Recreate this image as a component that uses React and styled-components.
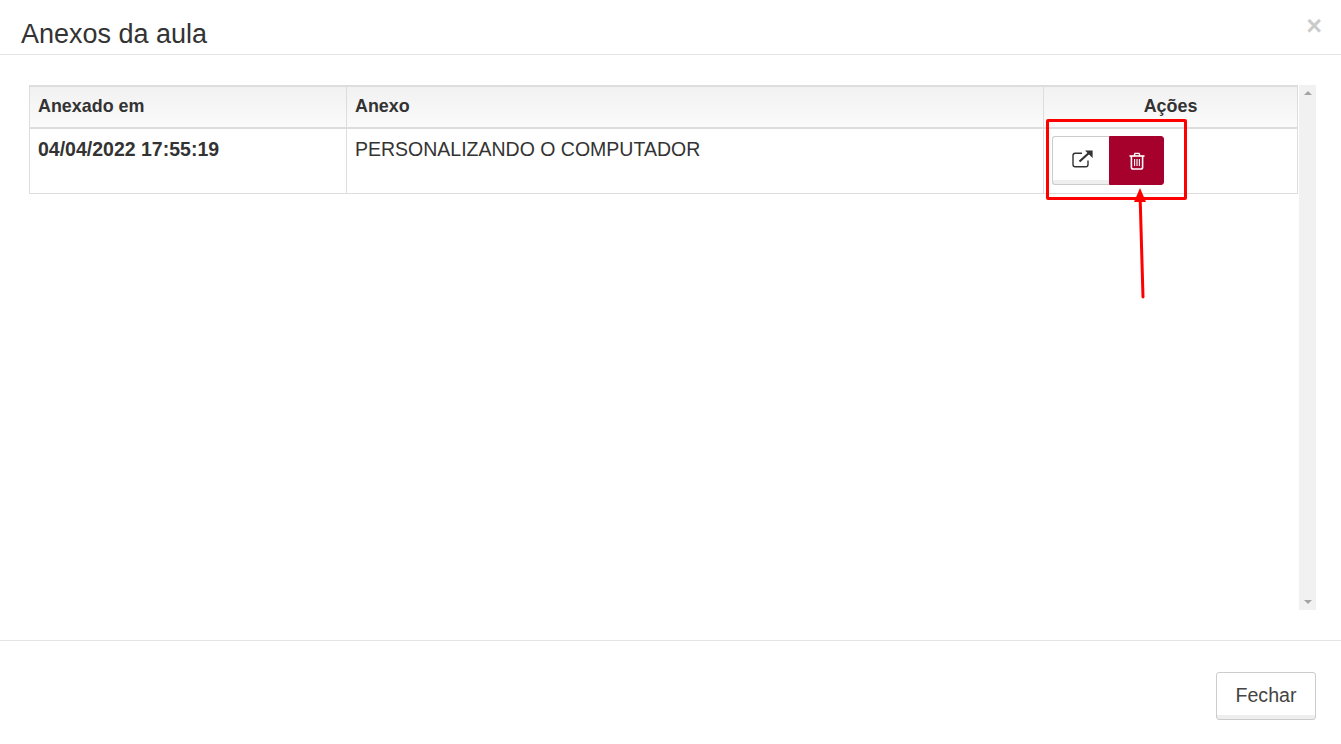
import React from "react";
import styled, { createGlobalStyle } from "styled-components";

const Global = createGlobalStyle`
  html, body { margin: 0; padding: 0; background: #fff; }
  body { font-family: "Liberation Sans", Arial, sans-serif; color: #333; }
`;

const Modal = styled.div`
  position: relative;
  width: 1341px;
  height: 744px;
  overflow: hidden;
  display: flex;
  flex-direction: column;
  background: #fff;
`;

const Header = styled.header`
  height: 54px;
  flex: none;
  box-sizing: content-box;
  border-bottom: 1px solid #e5e5e5;
  display: flex;
  align-items: flex-start;
  justify-content: space-between;
  padding: 0 19px 0 21px;
`;

const Title = styled.h4`
  margin: 18px 0 0;
  font-size: 27px;
  line-height: 32px;
  font-weight: 400;
  color: #333;
`;

const Close = styled.button`
  border: 0;
  padding: 0;
  margin: 13px 0 0;
  background: none;
  font-family: "Liberation Sans", Arial, sans-serif;
  font-size: 27px;
  line-height: 26px;
  font-weight: 700;
  color: #000;
  opacity: 0.2;
`;

const Body = styled.main`
  flex: none;
  height: 525px;
  margin-top: 30px;
  padding: 0 25px 0 29px;
  display: flex;
  gap: 2px;
`;

const TableArea = styled.div`
  flex: 1;
  min-width: 0;
`;

const Table = styled.table`
  width: 1268px;
  table-layout: fixed;
  border-collapse: collapse;
  font-size: 19.5px;
  line-height: 26px;
  color: #333;
`;

const HeadRow = styled.tr`
  height: 42px;
  background: linear-gradient(to bottom, #f1f1f1, #fbfbfb);
`;

const Th = styled.th`
  box-sizing: border-box;
  padding: 0 8px 2px;
  font-size: 17.9px;
  line-height: 20px;
  font-weight: 700;
  text-align: ${(p) => p.$align || "left"};
  border: 1px solid #ddd;
  border-top: 2px solid #ddd;
  border-bottom: 2px solid #ddd;
  vertical-align: middle;
`;

const Td = styled.td`
  box-sizing: border-box;
  height: 65px;
  padding: 7px 8px;
  vertical-align: top;
  border: 1px solid #ddd;
  font-weight: ${(p) => (p.$bold ? 700 : 400)};
`;

const ButtonGroup = styled.div`
  display: flex;
  width: 112px;
  height: 49px;
`;

const IconButton = styled.button`
  box-sizing: border-box;
  width: ${(p) => (p.$danger ? "55px" : "57px")};
  height: 49px;
  padding: 0;
  display: flex;
  align-items: center;
  justify-content: center;
  border: ${(p) => (p.$danger ? "1px solid #a6002c" : "1px solid #ccc")};
  border-right-width: ${(p) => (p.$danger ? "1px" : "0")};
  border-radius: ${(p) => (p.$danger ? "0 3px 3px 0" : "3px 0 0 3px")};
  background: ${(p) =>
    p.$danger ? "#a6002c" : "linear-gradient(to bottom, #fff 92%, #eee 92%)"};
  color: ${(p) => (p.$danger ? "#fff" : "#333")};
`;

const OpenIcon = styled.svg`
  margin: 0 0 4px 3px;
`;

const Scrollbar = styled.div`
  flex: none;
  width: 17px;
  background: #f1f1f1;
  display: flex;
  flex-direction: column;
  justify-content: space-between;
  align-items: center;
  padding: 6px 0;
`;

const ScrollUp = styled.span`
  width: 0;
  height: 0;
  border-left: 4px solid transparent;
  border-right: 4px solid transparent;
  border-bottom: 4px solid #a3a3a3;
`;

const ScrollDown = styled.span`
  width: 0;
  height: 0;
  border-left: 4px solid transparent;
  border-right: 4px solid transparent;
  border-top: 4px solid #a3a3a3;
`;

const Footer = styled.footer`
  margin-top: 30px;
  flex: 1;
  border-top: 1px solid #e5e5e5;
  display: flex;
  justify-content: flex-end;
  align-items: flex-start;
  padding: 31px 25px 0 0;
`;

const CloseButton = styled.button`
  box-sizing: border-box;
  width: 100px;
  height: 48px;
  border: 1px solid #ccc;
  border-radius: 3px;
  background: linear-gradient(to bottom, #fff 92%, #eee 92%);
  font-family: "Liberation Sans", Arial, sans-serif;
  font-size: 19.6px;
  line-height: 44px;
  color: #444;
  padding: 0 0 2px;
`;

const Highlight = styled.div`
  position: absolute;
  left: 1046px;
  top: 119px;
  width: 141px;
  height: 81px;
  box-sizing: border-box;
  border: 3px solid #fe0000;
  border-radius: 2px;
  pointer-events: none;
`;

const Arrow = styled.svg`
  position: absolute;
  left: 1125px;
  top: 180px;
  pointer-events: none;
`;

export default function App() {
  return (
    <Modal>
      <Global />
      <Header>
        <Title>Anexos da aula</Title>
        <Close>×</Close>
      </Header>
      <Body>
        <TableArea>
          <Table>
            <colgroup>
              <col style={{ width: 317 }} />
              <col style={{ width: 697 }} />
              <col style={{ width: 254 }} />
            </colgroup>
            <thead>
              <HeadRow>
                <Th>Anexado em</Th>
                <Th>Anexo</Th>
                <Th $align="center">Ações</Th>
              </HeadRow>
            </thead>
            <tbody>
              <tr>
                <Td $bold>04/04/2022 17:55:19</Td>
                <Td>PERSONALIZANDO O COMPUTADOR</Td>
                <Td>
                  <ButtonGroup>
                    <IconButton aria-label="Abrir">
                      <OpenIcon width="22" height="18" viewBox="0 0 22 18" fill="none">
                        <path d="M16 10.5V14.5a2.2 2.2 0 0 1-2.2 2.2H3.2A2.2 2.2 0 0 1 1 14.5V5.5a2.2 2.2 0 0 1 2.2-2.2H10" stroke="#333" strokeWidth="1.4" />
                        <path d="M7.5 11.5L18 2" stroke="#333" strokeWidth="2.2" />
                        <path d="M13 .6h7.6v7.4z" fill="#333" />
                      </OpenIcon>
                    </IconButton>
                    <IconButton $danger aria-label="Excluir">
                      <svg width="16" height="18" viewBox="0 0 16 18" fill="none">
                        <path d="M0.5 4h15" stroke="#fff" strokeWidth="1.6" />
                        <path d="M5 4l1-2.6h4L11 4" stroke="#fff" strokeWidth="1.4" />
                        <path d="M2.4 4v11.2a1.8 1.8 0 0 0 1.8 1.8h7.6a1.8 1.8 0 0 0 1.8-1.8V4" stroke="#fff" strokeWidth="1.6" />
                        <path d="M5.6 7v7M8 7v7M10.4 7v7" stroke="#fff" strokeWidth="1.1" />
                      </svg>
                    </IconButton>
                  </ButtonGroup>
                </Td>
              </tr>
            </tbody>
          </Table>
        </TableArea>
        <Scrollbar>
          <ScrollUp />
          <ScrollDown />
        </Scrollbar>
      </Body>
      <Footer>
        <CloseButton>Fechar</CloseButton>
      </Footer>
      <Highlight />
      <Arrow width="30" height="125" viewBox="0 0 30 125">
        <path d="M18 117L15.2 20" stroke="#fe0000" strokeWidth="3" strokeLinecap="round" fill="none" />
        <path d="M15 8L21 22H9z" fill="#fe0000" />
      </Arrow>
    </Modal>
  );
}
